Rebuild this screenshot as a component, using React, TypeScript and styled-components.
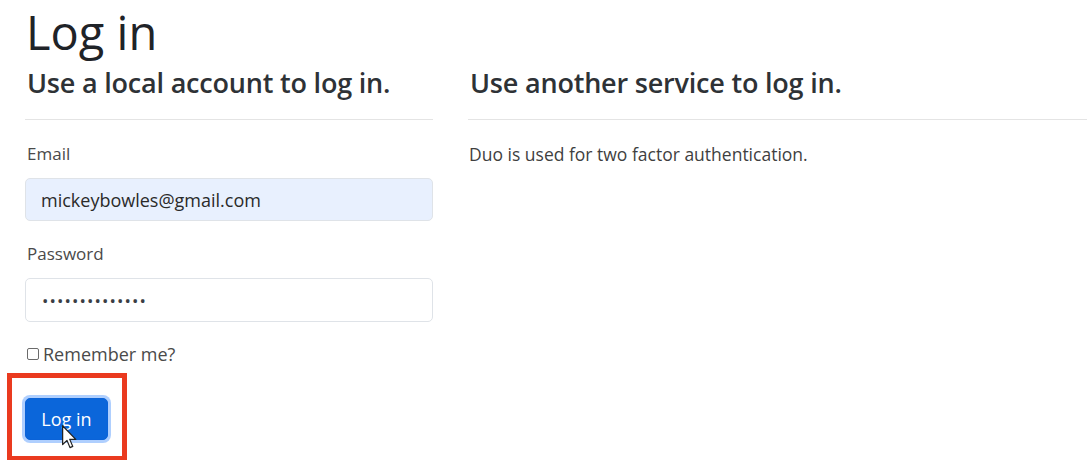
import React from "react";
import styled, { createGlobalStyle } from "styled-components";

const GlobalStyle = createGlobalStyle`
  html, body {
    margin: 0;
    padding: 0;
    background: #ffffff;
  }
  body {
    font-family: "Open Sans", "Noto Sans", sans-serif;
    color: #212529;
    overflow: hidden;
  }
`;

const Page = styled.main`
  width: 1087px;
  height: 460px;
  padding: 5px 0 0 26px;
  box-sizing: border-box;
  overflow: hidden;
`;

const Title = styled.h1`
  margin: 0;
  font-size: 47px;
  font-weight: 500;
  line-height: 1.15;
  color: #1f2328;
`;

const Columns = styled.div`
  display: grid;
  grid-template-columns: 408px 1fr;
  column-gap: 35px;
  margin-left: -1px;
`;

const Column = styled.section`
  display: flex;
  flex-direction: column;
`;

const SectionHeading = styled.h2`
  margin: 8px 0 0 2px;
  font-size: 27px;
  font-weight: 600;
  line-height: 1.2;
  color: #2e3236;
  letter-spacing: -0.2px;
`;

const Rule = styled.hr`
  margin: 20px 0 0;
  border: 0;
  border-top: 1px solid #e4e4e4;
`;

const FieldLabel = styled.label<{ $gap?: number }>`
  display: block;
  margin: ${(p) => p.$gap ?? 22}px 0 0 2px;
  font-size: 17px;
  line-height: 24px;
  color: #4a4a4a;
`;

const TextField = styled.input<{ $filled?: boolean }>`
  display: block;
  box-sizing: border-box;
  width: 408px;
  height: 43px;
  margin-top: 12px;
  padding: 0 15px;
  border: 1px solid #dfe3e8;
  border-radius: 5px;
  background: ${(p) => (p.$filled ? "#e8f0fe" : "#ffffff")};
  font-family: "Open Sans", "Noto Sans", sans-serif;
  font-size: 18px;
  color: #2a2a2a;
  outline: none;
`;

const PasswordField = styled(TextField)`
  height: 44px;
  padding-left: 16px;
  font-size: 17px;
  letter-spacing: 1.1px;
  color: #3a3d44;
`;

const CheckRow = styled.label`
  display: flex;
  align-items: center;
  gap: 4px;
  margin: 20px 0 0 2px;
  font-size: 18px;
  line-height: 24px;
  color: #4a4a4a;
`;

const CheckBox = styled.input`
  appearance: none;
  margin: 0;
  width: 12px;
  height: 12px;
  border: 1.5px solid #6b6b6b;
  border-radius: 2px;
  background: #fff;
`;

const Highlight = styled.div`
  position: relative;
  box-sizing: border-box;
  width: 120px;
  height: 88px;
  margin: 7px 0 0 -18px;
  padding: 20px 0 0 13px;
  border: 5px solid #ea3a1f;
`;

const PrimaryButton = styled.button`
  box-sizing: border-box;
  width: 83px;
  height: 42px;
  padding: 0;
  border: 1px solid #0b63d8;
  border-radius: 5px;
  background: #0b66da;
  box-shadow: 0 0 0 3px rgba(110, 168, 254, 0.55);
  font-family: "Open Sans", "Noto Sans", sans-serif;
  font-size: 18px;
  color: #ffffff;
  cursor: default;
`;

const Pointer = styled.svg`
  position: absolute;
  left: 50px;
  top: 47px;
  width: 15px;
  height: 24px;
  pointer-events: none;
`;

const InfoText = styled.p`
  margin: 22px 0 0 1px;
  font-size: 17.5px;
  line-height: 24px;
  color: #3f3f3f;
`;

export default function App() {
  return (
    <>
      <GlobalStyle />
      <Page>
        <Title>Log in</Title>
        <Columns>
          <Column>
            <SectionHeading>Use a local account to log in.</SectionHeading>
            <Rule />
            <FieldLabel htmlFor="email">Email</FieldLabel>
            <TextField id="email" $filled readOnly value="mickeybowles@gmail.com" />
            <FieldLabel htmlFor="password" $gap={21}>
              Password
            </FieldLabel>
            <PasswordField id="password" type="password" readOnly value="mickeybowles14" />
            <CheckRow>
              <CheckBox type="checkbox" />
              Remember me?
            </CheckRow>
            <Highlight>
              <PrimaryButton type="button">Log in</PrimaryButton>
              <Pointer viewBox="0 0 12 19">
                <path
                  d="M0.5 0.5 L0.5 15.5 L4 12.2 L6.4 18 L8.6 17 L6.2 11.4 L11 11.4 Z"
                  fill="#ffffff"
                  stroke="#222"
                  strokeWidth="1"
                  strokeLinejoin="round"
                />
              </Pointer>
            </Highlight>
          </Column>
          <Column>
            <SectionHeading>Use another service to log in.</SectionHeading>
            <Rule />
            <InfoText>Duo is used for two factor authentication.</InfoText>
          </Column>
        </Columns>
      </Page>
    </>
  );
}
